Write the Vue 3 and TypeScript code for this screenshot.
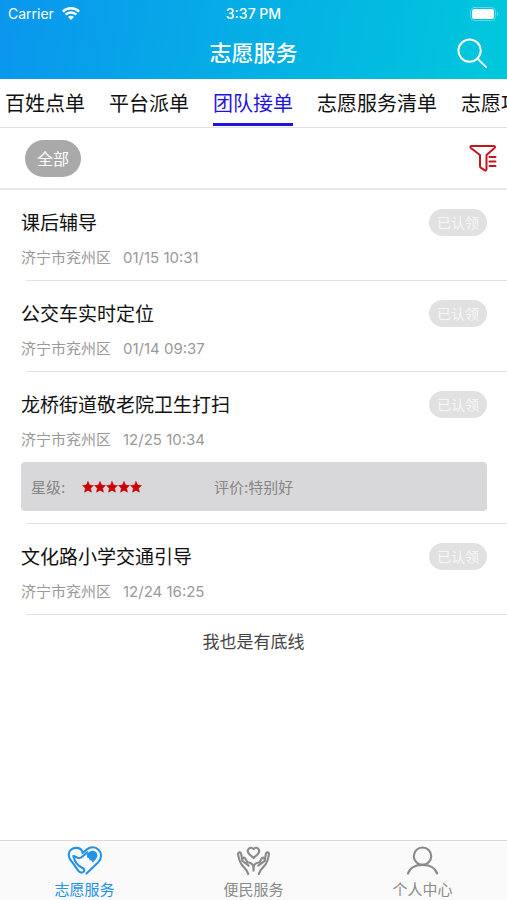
<script setup lang="ts">
import { ref } from 'vue'

interface Review {
  stars: number
  comment: string
}

interface Task {
  id: number
  title: string
  area: string
  time: string
  status: string
  review?: Review
}

const tabs: string[] = ['百姓点单', '平台派单', '团队接单', '志愿服务清单', '志愿项目']
const activeTab = ref<number>(2)

const tasks: Task[] = [
  { id: 1, title: '课后辅导', area: '济宁市兖州区', time: '01/15 10:31', status: '已认领' },
  { id: 2, title: '公交车实时定位', area: '济宁市兖州区', time: '01/14 09:37', status: '已认领' },
  {
    id: 3,
    title: '龙桥街道敬老院卫生打扫',
    area: '济宁市兖州区',
    time: '12/25 10:34',
    status: '已认领',
    review: { stars: 5, comment: '特别好' },
  },
  { id: 4, title: '文化路小学交通引导', area: '济宁市兖州区', time: '12/24 16:25', status: '已认领' },
]
</script>

<template>
  <div class="page">
    <header class="header">
      <div class="status">
        <div class="carrier">
          <span>Carrier</span>
          <svg class="wifi" viewBox="0 0 18 13" aria-hidden="true">
            <path d="M.8 4.600a11.700 11.700 0 0 1 16.400 0" />
            <path d="M3.600 7.700a7.700 7.700 0 0 1 10.800 0" />
            <path class="dot" d="M6 10.100a4.300 4.300 0 0 1 6 0L9 13z" />
          </svg>
        </div>
        <span class="clock">3:37 PM</span>
        <svg class="battery" viewBox="0 0 29 14" aria-hidden="true">
          <rect class="shell" x="0.5" y="0.5" width="25" height="13" rx="4" />
          <rect class="charge" x="2" y="2" width="22" height="10" rx="2.5" />
          <path class="tip" d="M27 5a2.2 2.2 0 0 1 0 4z" />
        </svg>
      </div>
      <div class="titlebar">
        <h1>志愿服务</h1>
        <button class="icon-button" type="button" aria-label="搜索">
          <svg class="search" viewBox="0 0 32 32" aria-hidden="true">
            <circle cx="13" cy="13" r="11.5" />
            <path d="M21 21l9 9" />
          </svg>
        </button>
      </div>
    </header>

    <nav class="tabs">
      <button
        v-for="(tab, i) in tabs"
        :key="tab"
        type="button"
        class="tab"
        :class="{ active: i === activeTab }"
        @click="activeTab = i"
      >
        {{ tab }}
      </button>
    </nav>

    <div class="filters">
      <button class="chip" type="button">全部</button>
      <button class="icon-button" type="button" aria-label="筛选">
        <svg class="funnel" viewBox="0 0 28 28" aria-hidden="true">
          <path d="M2.6 2h22.2c1.2 0 1.600 1.200.8 2L17.500 11V25c0 1.400-1 1.800-2 1.100l-3.800-2.400c-.5-.3-.7-.8-.7-1.400V11L1.800 4c-.8-.8-.4-2 .8-2z" />
          <path d="M20.500 13h6M20.500 17.500h6M20.500 22h6" />
        </svg>
      </button>
    </div>

    <main class="content">
      <ul class="list">
        <li v-for="task in tasks" :key="task.id" class="item">
          <div class="row">
            <h2>{{ task.title }}</h2>
            <span class="badge">{{ task.status }}</span>
          </div>
          <div class="meta">
            <span>{{ task.area }}</span>
            <time>{{ task.time }}</time>
          </div>
          <div v-if="task.review" class="review">
            <div class="rating">
              <span>星级:</span>
              <span class="stars" role="img" :aria-label="`${task.review.stars} 星`">
                <svg v-for="n in task.review.stars" :key="n" viewBox="0 0 24 24" aria-hidden="true">
                  <path d="M12 1l3.300 7.200 7.700.9-5.700 5.400 1.600 7.800L12 18.400l-6.900 3.900 1.600-7.800L1 9.100l7.700-.9z" />
                </svg>
              </span>
            </div>
            <span>评价:{{ task.review.comment }}</span>
          </div>
        </li>
      </ul>
      <p class="end">我也是有底线</p>
    </main>

    <nav class="tabbar">
      <a href="#service" class="dest current">
        <svg viewBox="0 0 36 30" aria-hidden="true">
          <path d="M19.500 28.500L31.500 17C35.500 13 35.500 7 32 3.800 28.500.500 23.500.600 20 3.500L15.500 7.200C15 4 12.500 2 8.700 2 3.500 2 1 5.500 1.200 9.500c.1 2.500 1.200 4.500 3 6.500L11 25.500c1.800 2.300 4 2.500 5.500 1.200 1.300-1.200.8-3-1-3.900C10 20.500 7.500 16.500 6 10.500c2.500 0 3.500 2.200 6 2.200C15 12.500 16.500 9.500 20.500 6.500" />
          <path class="solid" d="M20 8.500C22.800 4.600 26.500 3.900 29 6c2.600 2.200 2.300 5.500.2 7.700L26 17.300l-1.300-2.200-2-.4-.4-2.100-2.200-.6z" />
        </svg>
        <span>志愿服务</span>
      </a>
      <a href="#convenience" class="dest">
        <svg viewBox="0 0 36 30" aria-hidden="true">
          <path d="M17.500 12.500l-4.600-4.300c-3.500-4.200 1.300-8.700 4.600-5 3.300-3.700 8.100.8 4.600 5z" />
          <path d="M12 29c-.8-4.500-4.500-6.500-6.500-9.500C2.700 16 2.200 12 1.500 8.500c0-2.300 2.700-2.700 3.200-.3L6 15.500l6.500 4.700M6 14c.5-2.500 2.300-2.500 3.300-.5l2 3.300c3.700.6 6.200 2.500 6.200 5.700v3" />
          <path d="M23 29c.8-4.500 4.500-6.500 6.500-9.500 2.800-3.500 3.300-7.500 4-11 0-2.300-2.700-2.700-3.200-.3L29 15.500l-6.500 4.700M29 14c-.5-2.500-2.300-2.500-3.300-.5l-2 3.300c-3.700.6-6.200 2.500-6.200 5.700" />
        </svg>
        <span>便民服务</span>
      </a>
      <a href="#profile" class="dest">
        <svg class="person" viewBox="0 0 36 30" aria-hidden="true">
          <circle cx="17.500" cy="10.500" r="9" />
          <path d="M2.500 28.500c1.500-5.800 7.500-9 15-9s13.500 3.200 15 9" />
        </svg>
        <span>个人中心</span>
      </a>
    </nav>
  </div>
</template>

<style>
body {
  margin: 0;
  background: #fff;
}
</style>

<style scoped>
.page {
  display: flex;
  flex-direction: column;
  min-height: 100vh;
  overflow: hidden;
  font-family: Inter, "Noto Sans CJK SC", sans-serif;
  font-size: 15px;
  color: #111;
}
button {
  margin: 0;
  padding: 0;
  border: 0;
  background: none;
  font: inherit;
  color: inherit;
  cursor: pointer;
}
svg {
  display: block;
  fill: none;
  stroke: currentColor;
  stroke-linecap: round;
  stroke-linejoin: round;
}
h1,
h2,
p,
ul {
  margin: 0;
  padding: 0;
}

.header {
  background: linear-gradient(100deg, #0a96ee, #00c8dc);
  color: #fff;
}
.status {
  display: grid;
  grid-template-columns: 1fr auto 1fr;
  align-items: center;
  height: 27px;
  padding: 0 8px;
  font-size: 14px;
}
.carrier {
  display: flex;
  align-items: center;
  gap: 8px;
}
.wifi {
  width: 18px;
  height: 13px;
  stroke-width: 2.4;
  stroke-linecap: butt;
}
.wifi .dot {
  fill: currentColor;
  stroke: none;
}
.clock {
  font-weight: 500;
}
.battery {
  justify-self: end;
  width: 29px;
  height: 14px;
}
.battery .shell {
  stroke-opacity: 0.35;
}
.battery .charge,
.battery .tip {
  fill: currentColor;
  stroke: none;
}
.battery .tip {
  fill-opacity: 0.4;
}
.titlebar {
  display: grid;
  grid-template-columns: 1fr auto 1fr;
  align-items: center;
  height: 52px;
  padding: 0 19px;
}
.titlebar h1 {
  grid-column: 2;
  font-size: 22px;
  font-weight: 500;
  line-height: 32px;
}
.titlebar .icon-button {
  justify-self: end;
}
.search {
  width: 31px;
  height: 31px;
  stroke-width: 2;
}

.tabs {
  display: flex;
  gap: 24px;
  height: 48px;
  padding: 0 5px;
  border-bottom: 1px solid #e2e2e2;
  overflow: hidden;
}
.tab {
  flex: none;
  height: 47px;
  padding-top: 2px;
  border-bottom: 3px solid transparent;
  font-size: 20px;
  white-space: nowrap;
}
.tab.active {
  border-bottom-color: #1f14dc;
  color: #1f14dc;
}

.filters {
  display: flex;
  align-items: center;
  justify-content: space-between;
  height: 60px;
  padding: 0 10px 0 25px;
  border-bottom: 2px solid #e9e9e9;
}
.chip {
  height: 37px;
  padding: 0 12px;
  border-radius: 19px;
  background: #a9a9a9;
  color: #fff;
  font-size: 16px;
}
.funnel {
  width: 28px;
  height: 28px;
  color: #c4161c;
  stroke-width: 2;
}

.content {
  flex: 1;
}
.list {
  list-style: none;
}
.item {
  padding: 16px 20px 0 21px;
}
.item::after {
  content: "";
  display: block;
  height: 1px;
  margin: 0 -20px 0 5px;
  background: #e2e2e2;
}
.row {
  display: flex;
  align-items: center;
  justify-content: space-between;
}
.row h2 {
  padding-top: 4px;
  font-size: 19px;
  font-weight: 400;
  line-height: 28px;
}
.badge {
  padding: 0 8px;
  border-radius: 14px;
  background: #e1e1e1;
  color: #f7f7f7;
  font-size: 14px;
  line-height: 27px;
}
.meta {
  display: flex;
  gap: 12px;
  margin: 9px 0 11px;
  color: #999;
  line-height: 22px;
}
.review {
  display: grid;
  grid-template-columns: 183px 1fr;
  align-items: center;
  height: 49px;
  margin-bottom: 12px;
  padding: 0 10px;
  border-radius: 4px;
  background: #d8d8da;
  color: #858587;
}
.rating {
  display: flex;
  align-items: center;
  gap: 17px;
}
.stars {
  display: flex;
}
.stars svg {
  width: 12px;
  height: 12px;
  color: #cb0000;
  fill: currentColor;
}
.end {
  padding: 16px 0;
  color: #444;
  font-size: 17px;
  line-height: 22px;
  text-align: center;
}

.tabbar {
  display: grid;
  grid-template-columns: repeat(3, 1fr);
  border-top: 1px solid #d9d9d9;
  background: #fafafa;
}
.dest {
  display: flex;
  flex-direction: column;
  align-items: center;
  height: 59px;
  padding-top: 5px;
  box-sizing: border-box;
  color: #8a8a8a;
  line-height: 20px;
  text-decoration: none;
}
.dest svg {
  width: 36px;
  height: 30px;
  margin-bottom: 5px;
  stroke-width: 2.2;
}
.dest.current {
  color: #2492e8;
}
.dest .solid {
  fill: currentColor;
  stroke: none;
}
</style>
